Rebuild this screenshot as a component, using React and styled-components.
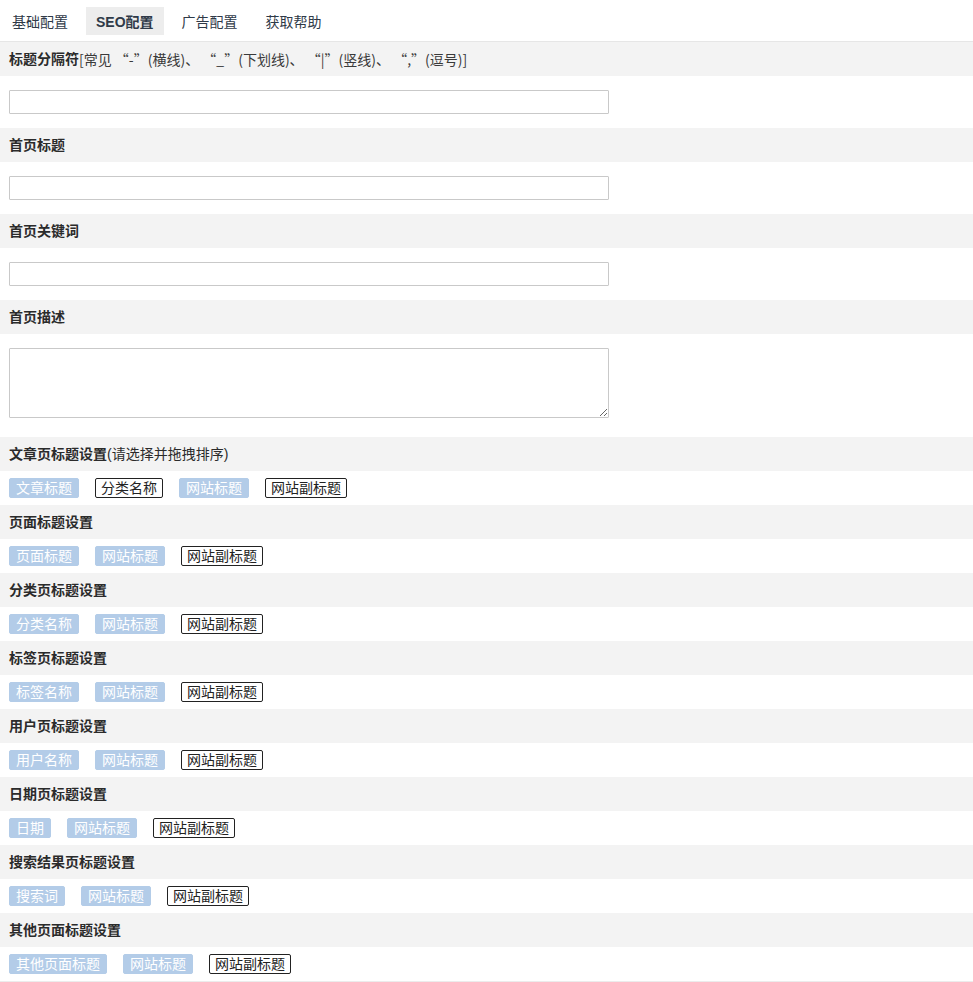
import React from 'react';
import styled, { createGlobalStyle } from 'styled-components';

const GlobalStyle = createGlobalStyle`
  html, body {
    margin: 0;
    padding: 0;
    background: #fff;
  }
  body {
    font-family: "Liberation Sans", "Noto Sans CJK SC", sans-serif;
    font-size: 14px;
    color: #333;
  }
`;

const Page = styled.div`
  width: 973px;
  border-bottom: 1px solid #ececec;
`;

const TabBar = styled.nav`
  display: flex;
  align-items: center;
  gap: 8px;
  height: 42px;
  padding-left: 2px;
  border-bottom: 1px solid #e6e6e6;
  box-sizing: border-box;
`;

const Tab = styled.a`
  display: flex;
  align-items: center;
  height: 28px;
  padding: 0 10px;
  color: #2f3a48;
  font-size: 14px;
  font-weight: ${(p) => (p.$active ? 700 : 400)};
  background: ${(p) => (p.$active ? '#ededed' : 'transparent')};
  cursor: pointer;
  text-decoration: none;
`;

const Header = styled.div`
  display: flex;
  align-items: center;
  height: 34px;
  padding: 0 9px;
  background: #f3f3f3;
  font-size: 14px;
  line-height: 20px;
  color: #2b2b2b;
`;

const Strong = styled.b`
  font-weight: 700;
`;

const Note = styled.span`
  font-family: "Noto Sans CJK SC", "Liberation Sans", sans-serif;
  color: #3a3a3a;
`;

const Field = styled.div`
  padding: ${(p) => (p.$tall ? '14px 9px 19px' : '14px 9px')};
  background: #fff;
`;

const TextInput = styled.input`
  display: block;
  width: 600px;
  height: 24px;
  box-sizing: border-box;
  border: 1px solid #c9c9c9;
  border-radius: 1px;
  padding: 0 6px;
  font: inherit;
`;

const TextArea = styled.textarea`
  display: block;
  width: 600px;
  height: 70px;
  box-sizing: border-box;
  border: 1px solid #c9c9c9;
  border-radius: 1px;
  padding: 4px 6px;
  font: inherit;
  resize: vertical;
`;

const TagRow = styled.div`
  display: flex;
  align-items: center;
  gap: 16px;
  height: 34px;
  padding: 0 9px;
  box-sizing: border-box;
`;

const Tag = styled.span`
  display: inline-flex;
  align-items: center;
  height: 20px;
  padding: ${(p) => (p.$on ? '0 6px' : '0 5px')};
  box-sizing: border-box;
  border: 1px solid ${(p) => (p.$on ? '#b3cce8' : '#222')};
  border-radius: 2px;
  background: ${(p) => (p.$on ? '#b3cce8' : '#fff')};
  color: ${(p) => (p.$on ? '#fff' : '#222')};
  font-size: 14px;
  line-height: 18px;
  white-space: nowrap;
  cursor: move;
`;

const tabs = ['基础配置', 'SEO配置', '广告配置', '获取帮助'];

const inputs = [
  {
    label: '标题分隔符',
    note: '[常见 “-”(横线)、 “_”(下划线)、 “|”(竖线)、 “,”(逗号)]',
  },
  { label: '首页标题' },
  { label: '首页关键词' },
];

const orders = [
  { label: '文章页标题设置', note: '(请选择并拖拽排序)', tags: [['文章标题', 1], ['分类名称', 0], ['网站标题', 1], ['网站副标题', 0]] },
  { label: '页面标题设置', tags: [['页面标题', 1], ['网站标题', 1], ['网站副标题', 0]] },
  { label: '分类页标题设置', tags: [['分类名称', 1], ['网站标题', 1], ['网站副标题', 0]] },
  { label: '标签页标题设置', tags: [['标签名称', 1], ['网站标题', 1], ['网站副标题', 0]] },
  { label: '用户页标题设置', tags: [['用户名称', 1], ['网站标题', 1], ['网站副标题', 0]] },
  { label: '日期页标题设置', tags: [['日期', 1], ['网站标题', 1], ['网站副标题', 0]] },
  { label: '搜索结果页标题设置', tags: [['搜索词', 1], ['网站标题', 1], ['网站副标题', 0]] },
  { label: '其他页面标题设置', tags: [['其他页面标题', 1], ['网站标题', 1], ['网站副标题', 0]] },
];

const App = () => (
  <Page lang="zh-CN">
    <GlobalStyle />
    <TabBar>
      {tabs.map((t) => (
        <Tab key={t} $active={t === 'SEO配置'}>
          {t}
        </Tab>
      ))}
    </TabBar>

    {inputs.map((f) => (
      <React.Fragment key={f.label}>
        <Header>
          <Strong>{f.label}</Strong>
          {f.note && <Note>{f.note}</Note>}
        </Header>
        <Field>
          <TextInput type="text" />
        </Field>
      </React.Fragment>
    ))}

    <Header>
      <Strong>首页描述</Strong>
    </Header>
    <Field $tall>
      <TextArea />
    </Field>

    {orders.map((o) => (
      <React.Fragment key={o.label}>
        <Header>
          <Strong>{o.label}</Strong>
          {o.note}
        </Header>
        <TagRow>
          {o.tags.map(([name, on]) => (
            <Tag key={name} $on={!!on}>
              {name}
            </Tag>
          ))}
        </TagRow>
      </React.Fragment>
    ))}
  </Page>
);

export default App;
